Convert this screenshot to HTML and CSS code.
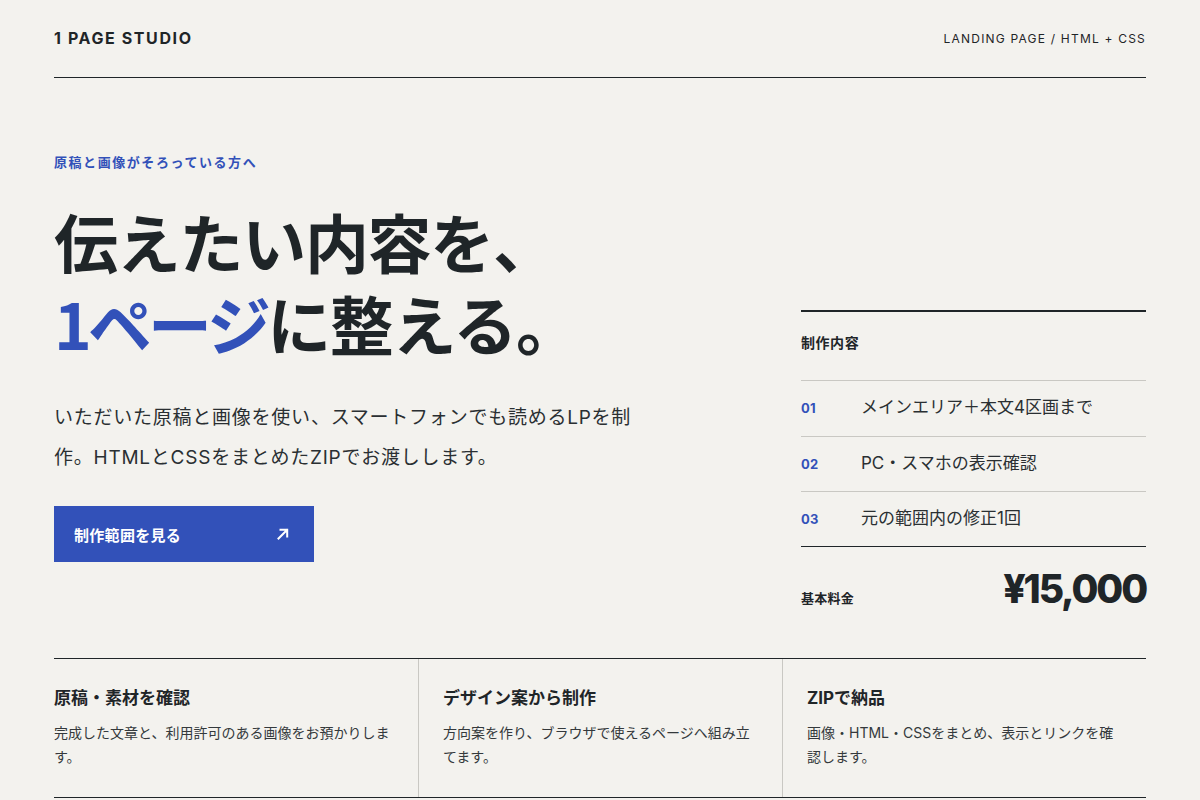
FILE: index.html
```html
<!DOCTYPE html>
<html lang="ja">
<head>
<meta charset="utf-8">
<title>1 PAGE STUDIO</title>
<link rel="stylesheet" href="styles.css">
</head>
<body>
<div class="page">
  <header class="site-header">
    <div class="logo">1 PAGE STUDIO</div>
    <div class="tagline">LANDING PAGE / HTML + CSS</div>
  </header>

  <section class="hero">
    <div class="hero-copy">
      <p class="eyebrow">原稿と画像がそろっている方へ</p>
      <h1 class="title">伝えたい内容を、<br><span class="accent">1ページ</span>に整える。</h1>
      <p class="lead">いただいた原稿と画像を使い、スマートフォンでも読めるLPを制作。HTMLとCSSをまとめたZIPでお渡しします。</p>
      <a class="cta" href="#scope">
        <span>制作範囲を見る</span>
        <svg class="cta-icon" viewBox="0 0 16 16" width="16" height="16" aria-hidden="true">
          <path d="M3.5 12.5 L12 4 M5.5 3.8 H12.2 V10.5" fill="none" stroke="#fff" stroke-width="2" stroke-linecap="square"/>
        </svg>
      </a>
    </div>

    <aside class="scope" id="scope">
      <h2 class="scope-title">制作内容</h2>
      <ul class="scope-list">
        <li class="scope-item"><span class="num">01</span><span class="item-text">メインエリア＋本文4区画まで</span></li>
        <li class="scope-item"><span class="num">02</span><span class="item-text">PC・スマホの表示確認</span></li>
        <li class="scope-item"><span class="num">03</span><span class="item-text">元の範囲内の修正1回</span></li>
      </ul>
      <div class="price-row">
        <span class="price-label">基本料金</span>
        <span class="price">¥15,000</span>
      </div>
    </aside>
  </section>

  <section class="features">
    <div class="feature">
      <h3 class="feature-title">原稿・素材を確認</h3>
      <p class="feature-text">完成した文章と、利用許可のある画像をお預かりします。</p>
    </div>
    <div class="feature">
      <h3 class="feature-title">デザイン案から制作</h3>
      <p class="feature-text">方向案を作り、ブラウザで使えるページへ組み立てます。</p>
    </div>
    <div class="feature">
      <h3 class="feature-title">ZIPで納品</h3>
      <p class="feature-text">画像・HTML・CSSをまとめ、表示とリンクを確認します。</p>
    </div>
  </section>
</div>
</body>
</html>
```

FILE: styles.css
```css
* { box-sizing: border-box; }

html, body {
  margin: 0;
  padding: 0;
  background: #f3f2ee;
}

body {
  font-family: Inter, "Noto Sans CJK JP", "Noto Sans", sans-serif;
  color: #1f2528;
}

.page {
  width: 1092px;
  margin: 0 auto;
}

/* header */
.site-header {
  display: flex;
  justify-content: space-between;
  align-items: center;
  height: 78px;
  padding-bottom: 1px;
  border-bottom: 1px solid #1f2528;
}

.logo {
  font-size: 16px;
  font-weight: 700;
  letter-spacing: 0.1em;
}

.tagline {
  font-size: 12px;
  letter-spacing: 0.1em;
  color: #1f2528;
}

/* hero */
.hero {
  display: grid;
  grid-template-columns: 1fr 345px;
  column-gap: 48px;
  align-items: end;
  padding: 76px 0 47px;
}

.hero-copy {
  padding-bottom: 49px;
}

.eyebrow {
  margin: 0;
  font-size: 13px;
  line-height: 16px;
  font-weight: 700;
  letter-spacing: 0.12em;
  color: #3251b9;
}

.title {
  margin: 29px 0 0;
  font-family: "Noto Sans CJK JP", sans-serif;
  font-size: 64px;
  line-height: 82px;
  font-weight: 700;
  letter-spacing: -0.02em;
  color: #1f2528;
}

.accent {
  color: #3251b9;
  letter-spacing: -0.06em;
}

.lead {
  margin: 35px 0 0;
  max-width: 610px;
  font-size: 19px;
  line-height: 40px;
  letter-spacing: 0.04em;
  color: #2a2f32;
}

.cta {
  display: flex;
  justify-content: space-between;
  align-items: center;
  width: 260px;
  height: 56px;
  margin-top: 28px;
  padding: 0 20px;
  background: #3251b9;
  color: #fff;
  text-decoration: none;
  font-size: 15px;
  font-weight: 700;
  letter-spacing: 0.02em;
}

.cta-icon {
  display: block;
  margin-right: 3px;
}

/* scope panel */
.scope {
  border-top: 2px solid #1f2528;
  margin-bottom: 1px;
}

.scope-title {
  margin: 0;
  padding: 21px 0 27px;
  font-size: 14px;
  line-height: 20px;
  font-weight: 700;
  letter-spacing: 0.04em;
}

.scope-list {
  list-style: none;
  margin: 0;
  padding: 0;
  border-top: 1px solid #c9c8c3;
  border-bottom: 1px solid #1f2528;
}

.scope-item {
  display: flex;
  align-items: baseline;
  height: 55px;
  padding-top: 14px;
}

.scope-item + .scope-item {
  border-top: 1px solid #c9c8c3;
}

.num {
  width: 60px;
  flex: none;
  font-size: 13px;
  font-weight: 700;
  color: #3251b9;
  letter-spacing: 0.02em;
}

.item-text {
  font-size: 17px;
  line-height: 24px;
  color: #2a2f32;
}

.price-row {
  display: flex;
  justify-content: space-between;
  align-items: baseline;
  padding-top: 21px;
}

.price-label {
  font-size: 13px;
  font-weight: 700;
  letter-spacing: 0.02em;
}

.price {
  font-size: 39px;
  line-height: 42px;
  font-weight: 800;
  letter-spacing: -0.055em;
}

/* features */
.features {
  display: grid;
  grid-template-columns: repeat(3, 1fr);
  border-top: 1px solid #1f2528;
  border-bottom: 1px solid #1f2528;
}

.feature {
  padding: 27px 24px 28px;
}

.feature:first-child {
  padding-left: 0;
}

.feature + .feature {
  border-left: 1px solid #c9c8c3;
}

.feature-title {
  margin: 0;
  font-size: 17px;
  line-height: 24px;
  font-weight: 700;
}

.feature-text {
  margin: 11px 0 0;
  font-size: 14px;
  line-height: 24px;
  color: #34393c;
}
```
